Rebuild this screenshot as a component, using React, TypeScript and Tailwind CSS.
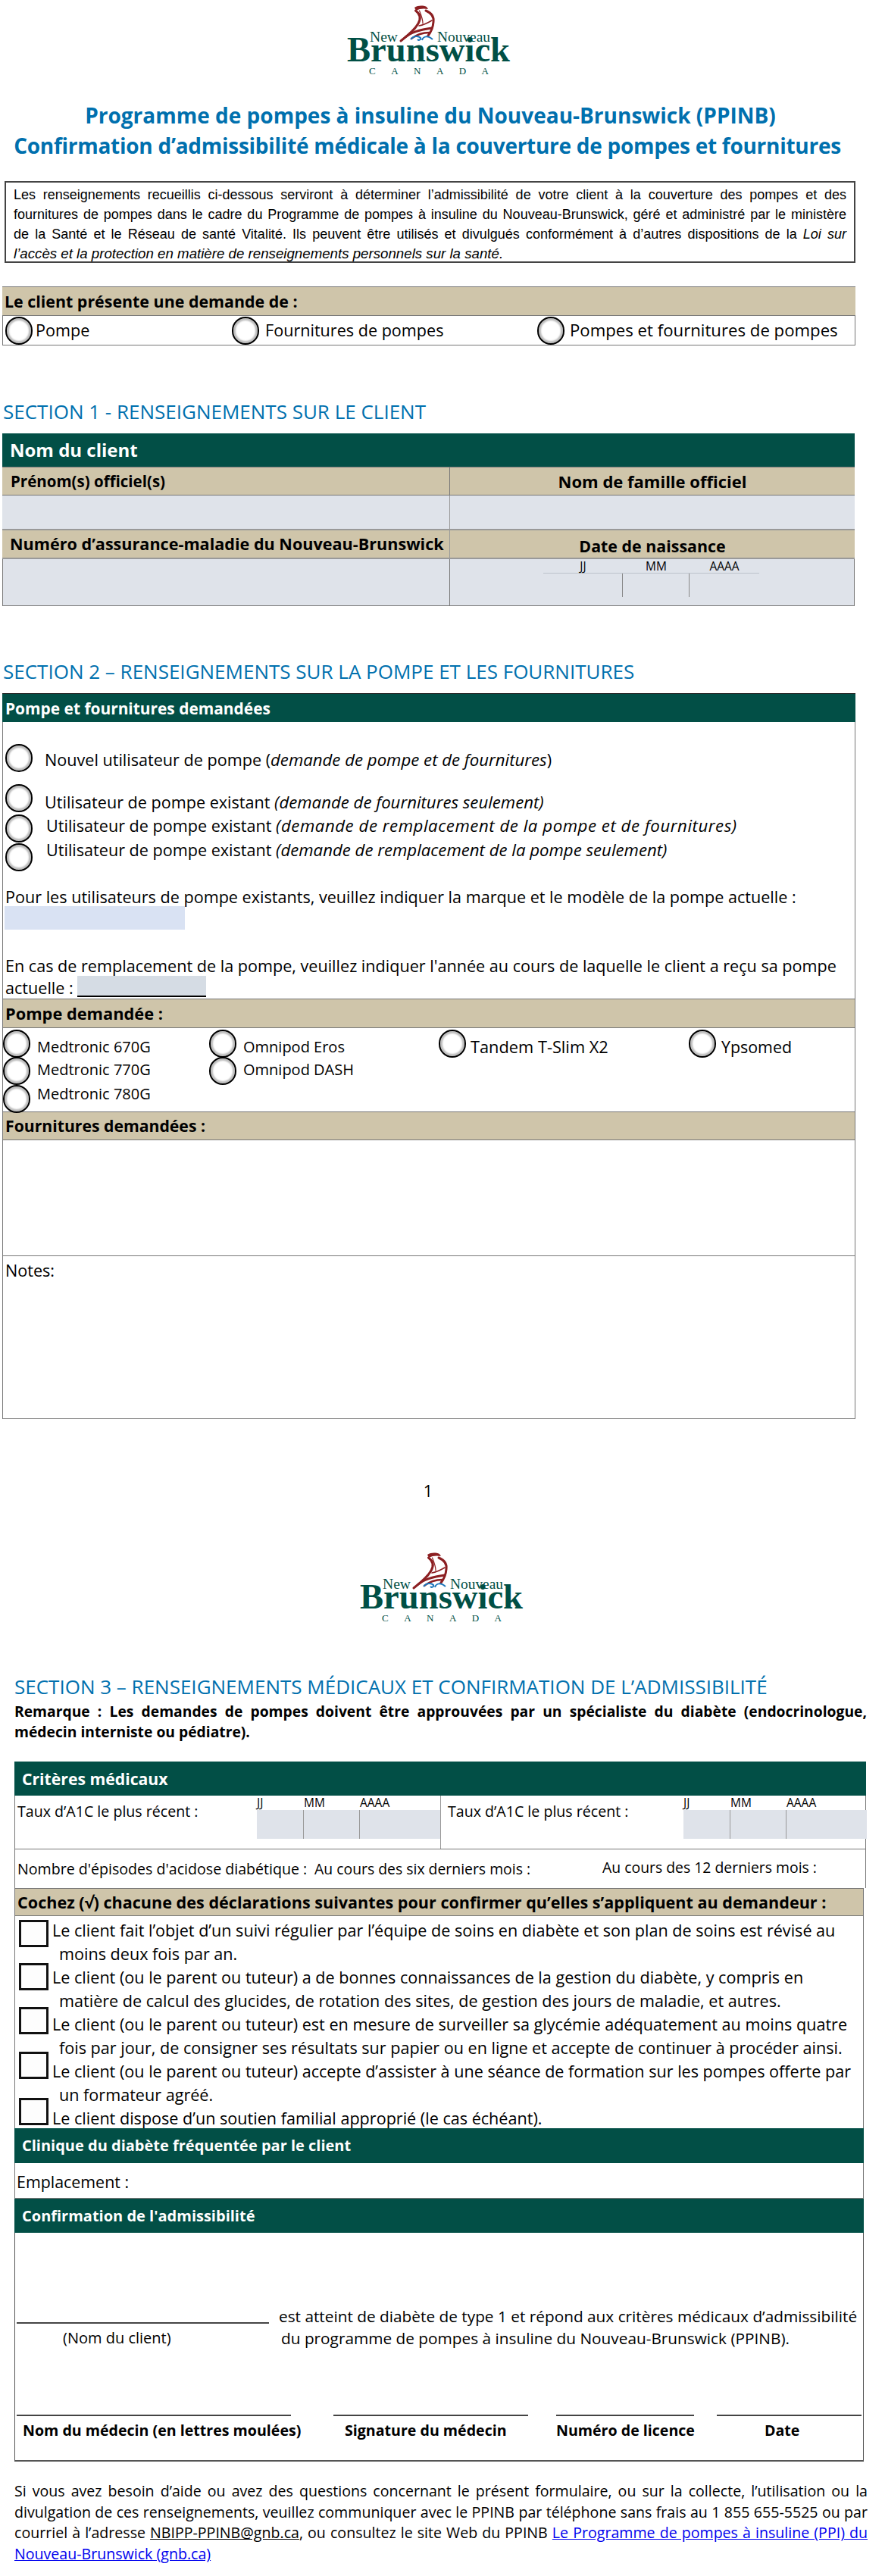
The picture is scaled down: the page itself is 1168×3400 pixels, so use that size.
import type { ReactNode } from 'react'

function Logo({ className }: { className: string }) {
  return (
    <svg viewBox="0 0 280 110" className={className}>
      <path d="M117 10 C122 7 128 7 133 9 L135 12 C130 11 124 11 119 14 Z" fill="#8c1f22" />
      <g fill="none" stroke="#8c1f22" strokeLinecap="round">
        <path d="M118.5 14 C124 18 126 24 122 31 C117 40 108 47 99 54" strokeWidth="3" />
        <path d="M132 14 C139 17 143 22 142 29 C141.500 36 139 42 135 47" strokeWidth="3" />
        <path d="M123.500 14 C126 20 128 25 128 31" strokeWidth="1.200" />
        <path d="M123 34 C129 33 135 30 140 27" strokeWidth="1.600" />
        <path d="M105 49 C112 43 125 39 140 37" strokeWidth="2.800" />
        <path d="M113 51 C118 47 127 43 137 43" strokeWidth="2.400" />
      </g>
      <path d="M112 52 C116 47 122 47 125 50 C126 52 123 54 121 52 M127 53 C129 47 135 47 141 52" fill="none" stroke="#1b75bb" strokeWidth="2" />
      <text x="58" y="55" textLength="37" lengthAdjust="spacingAndGlyphs" fontSize="19" fontFamily="'Liberation Serif', serif" fill="#004f45">New</text>
      <text x="147" y="55" textLength="70" lengthAdjust="spacingAndGlyphs" fontSize="19" fontFamily="'Liberation Serif', serif" fill="#004f45">Nouveau</text>
      <text x="28" y="81" textLength="215" lengthAdjust="spacingAndGlyphs" fontSize="46" fontWeight="700" fontFamily="'Liberation Serif', serif" fill="#004f45">Brunswick</text>
      <text x="57" y="98" textLength="158" fontSize="13" fontFamily="'Liberation Serif', serif" fill="#004f45">CANADA</text>
    </svg>
  )
}

function Radio({ className = '' }: { className?: string }) {
  return <span className={`h-[37px] w-[36px] shrink-0 rounded-full border-2 border-black bg-white shadow-[inset_0_0_2px_3px_#bdbdbd] ${className}`} />
}

function Check({ className }: { className: string }) {
  return <span className={`h-[36px] w-[39px] shrink-0 border-[3px] border-[#111] bg-[#fdfdfd] ${className}`} />
}

function SectionTitle({ children, className }: { children: ReactNode; className: string }) {
  return <h2 className={`text-[26px] leading-[32px] font-normal whitespace-nowrap text-[#0070ae] ${className}`}>{children}</h2>
}

function Tan({ children, className = '' }: { children: ReactNode; className?: string }) {
  return <div className={`flex items-center border-y border-[#777] bg-[#cfc5aa] font-bold whitespace-nowrap ${className}`}>{children}</div>
}

function Green({ children, className = '' }: { children: ReactNode; className?: string }) {
  return <div className={`flex items-center bg-[#024f46] font-bold whitespace-nowrap text-white ${className}`}>{children}</div>
}

// une ligne justifiée, comme dans le PDF
function JLine({ children, className = '' }: { children: ReactNode; className?: string }) {
  return <span className={`block whitespace-nowrap [text-align-last:justify] ${className}`}>{children}</span>
}

function DateBox() {
  return (
    <div className="w-[242px] shrink-0">
      <div className="grid h-[19px] grid-cols-[62px_74px_1fr] text-[15.5px] leading-[19px]">
        <span>JJ</span>
        <span>MM</span>
        <span>AAAA</span>
      </div>
      <div className="grid h-[38px] grid-cols-[62px_74px_1fr] bg-[#dfe3ea]">
        <span className="border-r border-[#999]" />
        <span className="border-r border-[#999]" />
        <span />
      </div>
    </div>
  )
}

const pumps = [
  { name: 'Medtronic 670G', cls: 'text-[20px]', gap: 'gap-[9px]' },
  { name: 'Omnipod Eros', cls: 'text-[20px]', gap: 'gap-[9px]' },
  { name: 'Tandem T-Slim X2', cls: 'text-[21.800px]', gap: 'gap-[6px]' },
  { name: 'Ypsomed', cls: 'text-[21.400px]', gap: 'gap-[7px]' },
]

const declarations = [
  { box: 'mt-[2px]', lines: ['Le client fait l’objet d’un suivi régulier par l’équipe de soins en diabète et son plan de soins est révisé au', 'moins deux fois par an.'] },
  { box: '-mt-[3px]', lines: ['Le client (ou le parent ou tuteur) a de bonnes connaissances de la gestion du diabète, y compris en', 'matière de calcul des glucides, de rotation des sites, de gestion des jours de maladie, et autres.'] },
  { box: '-mt-[7px]', lines: ['Le client (ou le parent ou tuteur) est en mesure de surveiller sa glycémie adéquatement au moins quatre', 'fois par jour, de consigner ses résultats sur papier ou en ligne et accepte de continuer à procéder ainsi.'] },
  { box: '-mt-[10px]', lines: ['Le client (ou le parent ou tuteur) accepte d’assister à une séance de formation sur les pompes offerte par', 'un formateur agréé.'] },
  { box: '-mt-[11px]', lines: ['Le client dispose d’un soutien familial approprié (le cas échéant).'] },
]

export default function App() {
  return (
    <div className="w-[1168px] bg-white pb-[12px] font-['Open_Sans',sans-serif] text-[21.600px] leading-[30px] text-black">
      <Logo className="ml-[430px] h-[110px] w-[280px]" />
      <h1 className="mt-[22px] w-[1168px] text-center text-[28px] leading-[40px] font-bold text-[#0070ae]">
        <span className="block -translate-x-[16px]">Programme de pompes à insuline du Nouveau-Brunswick (PPINB)</span>
        <span className="block -translate-x-[20px] tracking-[-0.27px]">Confirmation d’admissibilité médicale à la couverture de pompes et fournitures</span>
      </h1>

      <div className="mt-[27px] ml-[6px] h-[108px] w-[1123px] border-2 border-[#444] px-[10px] pt-[3px] font-['Liberation_Sans',sans-serif] text-[18px] leading-[26px]">
        <JLine>Les renseignements recueillis ci-dessous serviront à déterminer l’admissibilité de votre client à la couverture des pompes et des</JLine>
        <JLine>fournitures de pompes dans le cadre du Programme de pompes à insuline du Nouveau-Brunswick, géré et administré par le ministère</JLine>
        <JLine>de la Santé et le Réseau de santé Vitalité. Ils peuvent être utilisés et divulgués conformément à d’autres dispositions de la <i>Loi sur</i></JLine>
        <span className="block text-[18.700px] italic">l’accès et la protection en matière de renseignements personnels sur la santé.</span>
      </div>

      <div className="mt-[31px] ml-[3px] w-[1126px]">
        <Tan className="h-[39px] px-[3px] text-[21.400px]">Le client présente une demande de :</Tan>
        <div className="flex h-[39px] items-center border-x border-b border-[#777]">
          <Radio className="ml-[3px]" />
          <span className="ml-[4px] w-[259px]">Pompe</span>
          <Radio />
          <span className="ml-[8px] w-[359px]">Fournitures de pompes</span>
          <Radio />
          <span className="ml-[7px] text-[22.200px] whitespace-nowrap">Pompes et fournitures de pompes</span>
        </div>
      </div>

      <SectionTitle className="mt-[71px] ml-[4px]">SECTION 1 - RENSEIGNEMENTS SUR LE CLIENT</SectionTitle>
      <div className="mt-[13px] ml-[3px] w-[1125px]">
        <Green className="h-[44px] pl-[10px] text-[24px]">Nom du client</Green>
        <div className="grid grid-cols-[591px_1fr]">
          <Tan className="h-[38px] border-r pl-[11px] text-[20.500px]">Prénom(s) officiel(s)</Tan>
          <Tan className="h-[38px] justify-center text-[22px]">Nom de famille officiel</Tan>
          <div className="h-[46px] border-r border-b-2 border-[#999] bg-[#dfe3ea]" />
          <div className="h-[46px] border-b-2 border-[#999] bg-[#dfe3ea]" />
          <Tan className="h-[38px] border-t-0 border-r border-b-2 border-[#999] pl-[10px] text-[21.600px]">Numéro d’assurance-maladie du Nouveau-Brunswick</Tan>
          <Tan className="h-[38px] justify-center border-t-0 border-b-2 border-[#999] pt-[6px] text-[21.400px]">Date de naissance</Tan>
          <div className="h-[62px] border-r border-b border-l border-[#777] bg-[#dfe3ea]" />
          <div className="h-[62px] border-r border-b border-[#777] bg-[#dfe3ea]">
            <div className="ml-[123px] w-[285px]">
              <div className="grid h-[19px] grid-cols-[105px_88px_92px] border-b border-[#bcc3cc] text-center text-[15.500px] leading-[19px]">
                <span>JJ</span>
                <span>MM</span>
                <span>AAAA</span>
              </div>
              <div className="grid h-[31px] grid-cols-[105px_88px_92px]">
                <span className="border-r border-[#888]" />
                <span className="border-r border-[#888]" />
                <span />
              </div>
            </div>
          </div>
        </div>
      </div>

      <SectionTitle className="mt-[70px] ml-[4px]">SECTION 2 – RENSEIGNEMENTS SUR LA POMPE ET LES FOURNITURES</SectionTitle>
      <div className="mt-[13px] ml-[3px] w-[1126px] border-b border-[#777]">
        <Green className="h-[38px] border-t border-black pl-[4px] text-[20.900px]">Pompe et fournitures demandées</Green>
        <div className="h-[365px] border-x border-[#777] pt-[35px] whitespace-nowrap">
          <div className="flex h-[30px] items-center pl-[3px]">
            <Radio className="mb-[6px]" />
            <span className="ml-[16px]">Nouvel utilisateur de pompe (<i className="text-[22.200px]">demande de pompe et de fournitures</i>)</span>
          </div>
          <div className="mt-[26px] flex h-[30px] items-center pl-[3px]">
            <Radio className="mb-[12px]" />
            <span className="ml-[16px]">Utilisateur de pompe existant <i className="text-[22.200px]">(demande de fournitures seulement)</i></span>
          </div>
          <div className="mt-[1px] flex h-[30px] items-center pl-[3px]">
            <Radio className="mt-[6px]" />
            <span className="ml-[18px]">Utilisateur de pompe existant <i className="text-[22.200px] tracking-[0.55px]">(demande de remplacement de la pompe et de fournitures)</i></span>
          </div>
          <div className="mt-[2px] flex h-[30px] items-center pl-[3px]">
            <Radio className="mt-[18px]" />
            <span className="ml-[18px]">Utilisateur de pompe existant <i className="text-[22.200px]">(demande de remplacement de la pompe seulement)</i></span>
          </div>
          <p className="mt-[32px] pl-[3px]">Pour les utilisateurs de pompe existants, veuillez indiquer la marque et le modèle de la pompe actuelle :</p>
          <div className="-mt-[3px] ml-[2px] h-[31px] w-[238px] bg-[#d9e2f3]" />
          <p className="mt-[33px] pl-[3px]">En cas de remplacement de la pompe, veuillez indiquer l'année au cours de laquelle le client a reçu sa pompe</p>
          <div className="-mt-[2px] flex h-[28px] items-end pl-[3px]">
            <span className="w-[95px] leading-[24px]">actuelle :</span>
            <span className="h-[28px] w-[170px] border-b-2 border-black bg-[#d5dce4]" />
          </div>
        </div>
        <Tan className="h-[39px] border-x pl-[3px] text-[21.800px]">Pompe demandée :</Tan>
        <div className="h-[110px] border-x border-[#777] pt-[10px]">
          <div className="grid h-[30px] grid-cols-[272px_303px_330px_1fr] grid-rows-[30px] items-center">
            {pumps.map((p) => (
              <div key={p.name} className={`flex items-center ${p.gap}`}>
                <Radio className="mb-[10px]" />
                <span className={`whitespace-nowrap ${p.cls}`}>{p.name}</span>
              </div>
            ))}
          </div>
          <div className="grid h-[30px] grid-cols-[272px_303px_330px_1fr] grid-rows-[30px] items-center text-[20px]">
            <div className="flex items-center gap-[9px]">
              <Radio className="mt-[2px]" />
              <span>Medtronic 770G</span>
            </div>
            <div className="flex items-center gap-[9px]">
              <Radio className="mt-[2px]" />
              <span>Omnipod DASH</span>
            </div>
          </div>
          <div className="mt-[2px] flex h-[30px] items-center gap-[9px] text-[20px]">
            <Radio className="mt-[12px]" />
            <span>Medtronic 780G</span>
          </div>
        </div>
        <Tan className="h-[38px] border-x pl-[3px] text-[21.200px]">Fournitures demandées :</Tan>
        <div className="h-[153px] border-x border-b border-[#777]" />
        <div className="h-[214px] border-x border-[#777] pt-[4px] pl-[3px]">Notes:</div>
      </div>

      <div className="mt-[80px] ml-[556px] w-[18px] text-center">1</div>

      <Logo className="mt-[59px] ml-[447px] h-[110px] w-[280px]" />
      <SectionTitle className="mt-[58px] ml-[19px]">SECTION 3 – RENSEIGNEMENTS MÉDICAUX ET CONFIRMATION DE L’ADMISSIBILITÉ</SectionTitle>
      <div className="mt-[3px] ml-[19px] w-[1125px] text-[19.300px] leading-[27px] font-bold">
        <JLine>Remarque : Les demandes de pompes doivent être approuvées par un spécialiste du diabète (endocrinologue,</JLine>
        <span className="block">médecin interniste ou pédiatre).</span>
      </div>

      <div className="mt-[26px] ml-[19px] w-[1124px]">
        <Green className="h-[45px] pl-[10px] text-[21.200px]">Critères médicaux</Green>
        <div className="grid h-[70px] grid-cols-[562px_1fr] border-x border-[#777] text-[19.600px]">
          <div className="flex border-r border-[#999] pl-[3px]">
            <span className="w-[316px] pt-[6px] whitespace-nowrap">Taux d’A1C le plus récent :</span>
            <DateBox />
          </div>
          <div className="flex pl-[9px]">
            <span className="w-[311px] pt-[6px] whitespace-nowrap">Taux d’A1C le plus récent :</span>
            <DateBox />
          </div>
        </div>
        <div className="grid h-[52px] grid-cols-[392px_380px_1fr] items-center border-x border-t border-[#777] pl-[3px] text-[19.400px] whitespace-nowrap">
          <span className="text-[19.600px]">Nombre d'épisodes d'acidose diabétique :</span>
          <span>Au cours des six derniers mois :</span>
          <span className="mb-[4px]">Au cours des 12 derniers mois :</span>
        </div>
        <div className="w-[1121px]">
          <Tan className="h-[37px] border-x pl-[3px]">Cochez (√) chacune des déclarations suivantes pour confirmer qu’elles s’appliquent au demandeur :</Tan>
          <div className="h-[280px] border-x border-[#777] pt-[3px] whitespace-nowrap">
            {declarations.map((d) => (
              <div key={d.lines[0]} className="flex">
                <Check className={`ml-[5px] ${d.box}`} />
                <div className="ml-[5px] leading-[31px]">
                  <span className="block">{d.lines[0]}</span>
                  {d.lines[1] && <span className="ml-[9px] block">{d.lines[1]}</span>}
                </div>
              </div>
            ))}
          </div>
          <Green className="h-[46px] pl-[10px] text-[20px]">Clinique du diabète fréquentée par le client</Green>
          <div className="flex h-[46px] items-center border-x border-[#777] pt-[4px] pl-[2px] text-[21.400px]">Emplacement :</div>
          <Green className="h-[46px] border-t border-[#777] pl-[10px] text-[20px]">Confirmation de l'admissibilité</Green>
          <div className="h-[302px] border-x border-b-2 border-[#555] pt-[95px] whitespace-nowrap">
            <div className="flex pl-[2px] text-[20.800px]">
              <div className="w-[333px]">
                <div className="h-[25px] border-b-2 border-[#444]" />
                <div className="mt-[4px] pl-[61px] text-[20px]">(Nom du client)</div>
              </div>
              <div className="ml-[13px]">
                <div>est atteint de diabète de type 1 et répond aux critères médicaux d’admissibilité</div>
                <div className="-mt-px ml-[3px]">du programme de pompes à insuline du Nouveau-Brunswick (PPINB).</div>
              </div>
            </div>
            <div className="mt-[86px] flex pl-[2px] text-[19.600px] font-bold">
              <div className="w-[362px] border-t-2 border-[#444] pt-[4px] pl-[8px]">Nom du médecin (en lettres moulées)</div>
              <div className="ml-[56px] w-[257px] border-t-2 border-[#444] pt-[4px] pl-[15px]">Signature du médecin</div>
              <div className="ml-[37px] w-[182px] border-t-2 border-[#444] pt-[4px]">Numéro de licence</div>
              <div className="ml-[30px] w-[191px] border-t-2 border-[#444] pt-[4px] pl-[63px]">Date</div>
            </div>
          </div>
        </div>
      </div>

      <div className="mt-[25px] ml-[19px] w-[1126px] text-[19.600px] leading-[27.700px]">
        <JLine>Si vous avez besoin d’aide ou avez des questions concernant le présent formulaire, ou sur la collecte, l’utilisation ou la</JLine>
        <JLine>divulgation de ces renseignements, veuillez communiquer avec le PPINB par téléphone sans frais au 1 855 655-5525 ou par</JLine>
        <JLine>courriel à l’adresse <u>NBIPP-PPINB@gnb.ca</u>, ou consultez le site Web du PPINB <a className="text-[#0000ee] underline">Le Programme de pompes à insuline (PPI) du</a></JLine>
        <a className="block text-[#0000ee] underline">Nouveau-Brunswick (gnb.ca)</a>
      </div>
    </div>
  )
}
